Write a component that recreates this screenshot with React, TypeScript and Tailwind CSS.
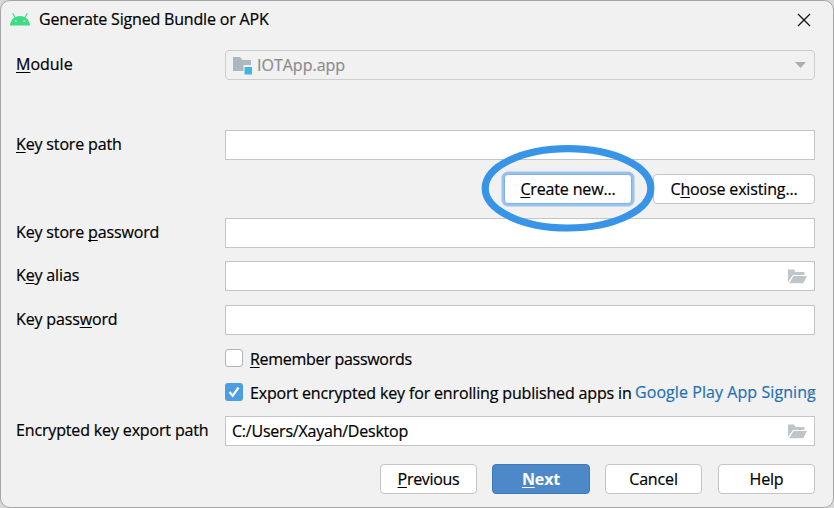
import type { ReactNode } from "react";

const U = ({ children }: { children: ReactNode }) => (
  <span className="underline decoration-1 underline-offset-[2px] [text-decoration-skip-ink:none]">{children}</span>
);

function Row({ label, gap, children }: { label: ReactNode; gap: string; children: ReactNode }) {
  return (
    <div className={`flex h-[30px] items-center ${gap}`}>
      <div className="w-[209px] shrink-0 whitespace-nowrap pb-[2px] leading-[28px]">{label}</div>
      {children}
    </div>
  );
}

function Field({ children, folder }: { children?: ReactNode; folder?: boolean }) {
  return (
    <div className="flex h-[30px] w-[590px] items-center justify-between border border-[#c4c4c4] bg-white pl-[6px] pr-[7px]">
      <span className="tracking-[-0.22px]">{children}</span>
      {folder && <FolderIcon />}
    </div>
  );
}

function FolderIcon() {
  return (
    <svg width="19" height="15" viewBox="0 0 19 15" fill="#bfc5c9">
      <path d="M0 .5h6l1.500 2.500h9v3H5L0 13z" />
      <path d="M5.500 7H19l-3.800 7.300H1.200z" />
    </svg>
  );
}

function Button({ children, look }: { children: ReactNode; look: string }) {
  return (
    <button className={`flex h-[30px] items-center justify-center whitespace-nowrap rounded-[4px] border leading-[28px] ${look}`}>
      <span>{children}</span>
    </button>
  );
}

const plain = "border-[#c4c4c4] bg-white";

export default function App() {
  return (
    <div className="h-[508px] w-[834px] overflow-hidden bg-[#d8d8d8] font-['Open_Sans','Noto_Sans',sans-serif] text-[16px] tracking-[-0.15px] text-black [-webkit-text-stroke:0.2px]">
      <div className="relative h-[508px] w-[834px] rounded-[10px] border border-[#a6a6a6] bg-[#f1f1f1] pl-[15px]">
        <div className="flex h-[37px] items-center">
          <svg className="-ml-[6px]" width="20" height="13" viewBox="0 0 20 13">
            <path d="M0 12.500C.4 7 4.500 3 10 3s9.600 4 10 9.500z" fill="#3ddc84" />
            <path d="M3 .7l2.300 4M17 .7l-2.300 4" stroke="#3ddc84" strokeWidth="1.100" strokeLinecap="round" />
            <circle cx="5.800" cy="8.200" r=".8" fill="#f1f1f1" />
            <circle cx="14.200" cy="8.200" r=".8" fill="#f1f1f1" />
          </svg>
          <span className="ml-[9px] flex-1 pb-[2px] tracking-[-0.18px]">Generate Signed Bundle or APK</span>
          <svg className="mr-[22px]" width="14" height="14" viewBox="0 0 14 14" stroke="#111" strokeWidth="1.300">
            <path d="M1 1l12 12M13 1L1 13" />
          </svg>
        </div>

        <Row gap="mt-[12px]" label={<span className="tracking-normal"><U>M</U>odule</span>}>
          <div className="flex h-[30px] w-[590px] items-center rounded-[4px] border border-[#cdcdcd] pl-[7px] pr-[8px] text-[#8c8c8c]">
            <svg width="20" height="20" viewBox="0 0 20 20">
              <path d="M0 2h7l2.500 3H18v5h-7.500v6H0z" fill="#adb7bd" />
              <path d="M11.500 12H19v7.500h-7.500z" fill="#40b6e0" />
            </svg>
            <span className="ml-[4px] flex-1 tracking-normal">IOTApp.app</span>
            <svg width="11" height="6" viewBox="0 0 11 6"><path d="M0 0h11L5.500 6z" fill="#adadad" /></svg>
          </div>
        </Row>

        <Row gap="mt-[50px]" label={<span><U>K</U>ey store path</span>}><Field /></Row>

        <div className="mt-[14px] flex h-[30px] w-[799px] justify-end gap-[21px]">
          <Button look="w-[128px] border-[#87afda] bg-white ring-[2.500px] ring-[#97c3f3]"><U>C</U>reate new...</Button>
          <Button look="w-[162px] border-[#c4c4c4] bg-white">C<U>h</U>oose existing...</Button>
        </div>

        <Row gap="mt-[14px]" label={<span>Key store <U>p</U>assword</span>}><Field /></Row>
        <Row gap="mt-[13px]" label={<span>K<U>e</U>y alias</span>}><Field folder /></Row>
        <Row gap="mt-[14px]" label={<span>Key pass<U>w</U>ord</span>}><Field /></Row>

        <div className="mt-[14px] ml-[209px] flex h-[18px] items-center whitespace-nowrap">
          <span className="h-[18px] w-[18px] rounded-[3px] border border-[#b4b4b4] bg-white" />
          <span className="ml-[7px] pt-[2px] tracking-[-0.28px]"><U>R</U>emember passwords</span>
        </div>
        <div className="mt-[16px] ml-[209px] flex h-[18px] items-center whitespace-nowrap">
          <span className="flex h-[18px] w-[18px] items-center justify-center rounded-[3px] bg-[#4d9de2]">
            <svg width="12" height="12" viewBox="0 0 12 12" fill="none" stroke="white" strokeWidth="2.200"><path d="M1.500 6l3.200 3.800L10.500 1.500" /></svg>
          </span>
          <span className="ml-[7px] w-[385px] pt-[2px]">Export encrypted key for enrolling published apps in</span>
          <a className="relative tracking-[0.070px] text-[#2470b3]">
            Google Play App Signing
            <svg className="absolute right-0 top-[10px]" width="9" height="5" viewBox="0 0 9 5">
              <path d="M1 4.500C2 1 7 1 8 4.500" fill="none" stroke="#8b9dac" strokeWidth="1.500" />
            </svg>
          </a>
        </div>

        <Row gap="mt-[15px]" label={<span>Encrypted key export path</span>}><Field folder>C:/Users/Xayah/Desktop</Field></Row>

        <div className="mt-[18px] flex w-[799px] justify-end">
          <Button look={`mr-[15px] w-[97px] tracking-[-0.300px] ${plain}`}><U>P</U>revious</Button>
          <Button look="mr-[15px] w-[98px] border-[#3f78ba] bg-[#4d89c9] font-bold text-white [-webkit-text-stroke:0]"><U>N</U>ext</Button>
          <Button look={`mr-[16px] w-[97px] ${plain}`}>Cancel</Button>
          <Button look={`w-[97px] ${plain}`}>Help</Button>
        </div>

        <svg className="absolute left-[480px] top-[144px]" width="176" height="88" viewBox="0 0 176 88">
          <ellipse cx="87" cy="43.300" rx="82.800" ry="39.700" fill="none" stroke="#3894e6" strokeWidth="7.200" />
        </svg>
      </div>
    </div>
  );
}
